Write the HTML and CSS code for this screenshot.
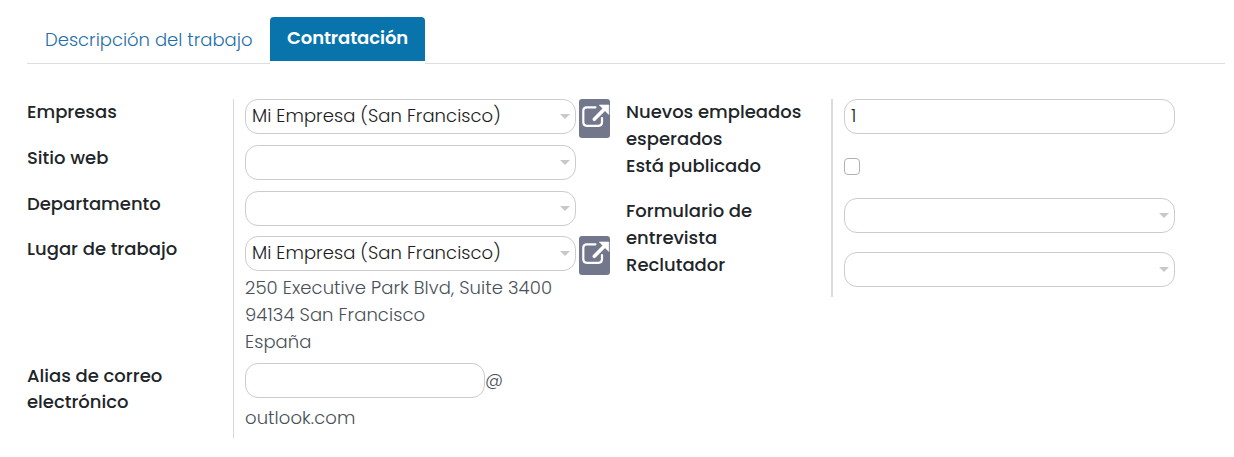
FILE: index.html
```html
<!DOCTYPE html>
<html lang="es">
<head>
<meta charset="utf-8">
<title>Contratación</title>
<link rel="stylesheet" href="styles.css">
</head>
<body>
<svg class="defs" width="0" height="0" aria-hidden="true">
  <symbol id="external" viewBox="0 0 31 39">
    <path d="M16.500 8.300H7.800Q4.300 8.300 4.300 11.800V23.300Q4.300 26.800 7.800 26.800H19.500Q23 26.800 23 23.300V19" fill="none" stroke="#fff" stroke-width="2.200" stroke-linecap="round"/>
    <path d="M15.300 20.300L26 9.600" fill="none" stroke="#fff" stroke-width="3.600" stroke-linecap="round"/>
    <path d="M20.300 6H29.800V15.500Z" fill="#fff" stroke="#fff" stroke-width=".6" stroke-linejoin="round"/>
  </symbol>
</svg>
<main class="sheet">
  <nav class="tabs">
    <a class="tab">Descripción del trabajo</a>
    <a class="tab active">Contratación</a>
  </nav>
  <div class="groups">
    <section class="group left">
      <div class="labels">
        <div class="label">Empresas</div>
        <div class="label">Sitio web</div>
        <div class="label">Departamento</div>
        <div class="label">Lugar de trabajo</div>
        <div class="label tight">Alias de correo<br>electrónico</div>
      </div>
      <div class="fields">
        <div class="row"><div class="input select">Mi Empresa (San Francisco)</div><button class="open"><svg><use href="#external"/></svg></button></div>
        <div class="row"><div class="input select"></div></div>
        <div class="row"><div class="input select"></div></div>
        <div class="place">
          <div class="row"><div class="input select">Mi Empresa (San Francisco)</div><button class="open"><svg><use href="#external"/></svg></button></div>
          <div class="address">250 Executive Park Blvd, Suite 3400<br>94134 San Francisco<br>España</div>
        </div>
        <div class="alias">
          <div class="row"><div class="input short"></div><span class="at">@</span></div>
          <div class="domain">outlook.com</div>
        </div>
      </div>
    </section>
    <section class="group right">
      <div class="labels">
        <div class="label">Nuevos empleados<br>esperados</div>
        <div class="label">Está publicado</div>
        <div class="label">Formulario de<br>entrevista</div>
        <div class="label">Reclutador</div>
      </div>
      <div class="fields">
        <div class="row"><div class="input">1</div></div>
        <div class="row"><span class="check"></span></div>
        <div class="row"><div class="input select"></div></div>
        <div class="row"><div class="input select"></div></div>
      </div>
    </section>
  </div>
</main>
</body>
</html>
```
FILE: styles.css
```css
* { box-sizing: border-box; }
body {
  margin: 0;
  background: #fff;
  color: #495057;
  font: 300 18px/27px Poppins, Inter, sans-serif;
}
.defs { display: block; }
.sheet { padding: 17px 9px 0 27px; }
.tabs {
  display: flex;
  height: 47px;
  background: linear-gradient(#dedede, #dedede) bottom / 100% 1px no-repeat;
}
.tab {
  width: 243px;
  padding: 9px 0 0 18px;
  color: #1f6fa8;
  white-space: nowrap;
}
.tab.active {
  width: 155px;
  padding: 7px 0 0 17px;
  border-radius: 4px 4px 0 0;
  background: linear-gradient(#0874ab, #0874ab) top / 100% 44px no-repeat #fff;
  color: #fff;
  font-weight: 600;
  letter-spacing: -.08px;
}
.groups { display: flex; padding-top: 35px; align-items: flex-start; }
.group { display: grid; }
.left { width: 599px; grid-template-columns: 206px 1fr; }
.right { width: 549px; grid-template-columns: 205px 344px; }
.labels, .fields { display: grid; }
.left .labels, .left .fields { grid-template-rows: 46px 46px 45px 127px 75px; }
.right .labels, .right .fields { grid-template-rows: 54px 45px 54px 45px; }
.left .fields { border-left: 1px solid #d8d8d8; padding-left: 11px; }
.right .fields { border-left: 2px solid #dcdcdc; padding-left: 11px; }
.label { margin-top: -1px; color: #212529; font-weight: 500; white-space: nowrap; }
.label.tight { margin-top: 0; line-height: 26px; }
.row { display: flex; align-items: flex-start; gap: 3px; }
.input {
  display: flex;
  align-items: center;
  width: 331px;
  height: 35px;
  padding: 0 5px 2px 6px;
  border: 1px solid #ccc;
  border-radius: 13px;
  color: #1c1c1c;
  letter-spacing: .05px;
  white-space: nowrap;
}
.select::after {
  content: "";
  margin: 1px 0 0 auto;
  border: 5px solid transparent;
  border-top-color: #c8c8c8;
  border-bottom: 0;
}
.short { width: 240px; }
.open {
  width: 31px;
  height: 39px;
  padding: 0;
  border: 0;
  border-radius: 3px;
  background: #73778c;
}
.open svg { display: block; width: 31px; height: 39px; }
.address { margin-top: -1px; letter-spacing: .08px; white-space: nowrap; }
.alias .row { gap: 0; }
.at { padding-top: 3px; }
.domain { padding-top: 6px; letter-spacing: .08px; }
.check {
  width: 16px;
  height: 17px;
  margin-top: 5px;
  border: 1px solid #adb0bd;
  border-radius: 4px;
}
```
